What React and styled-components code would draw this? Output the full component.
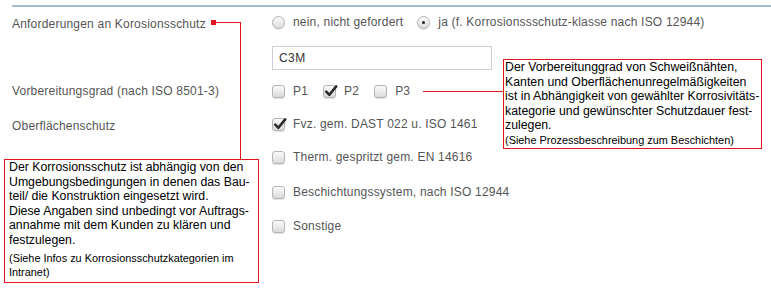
import React from 'react';
import styled, { createGlobalStyle } from 'styled-components';

const GlobalStyle = createGlobalStyle`
  body {
    margin: 0;
    background: #fff;
    font-family: "Liberation Sans", Arial, sans-serif;
  }
`

const Page = styled.div`
  position: relative;
  width: 771px;
  height: 294px;
  padding-left: 12px;
  box-sizing: border-box;
  overflow: hidden;
`

const Divider = styled.div`
  margin-top: 5px;
  height: 2px;
  background: #a3bccb;
`

const Row = styled.div`
  display: grid;
  grid-template-columns: 260px 1fr;
  align-items: center;
  height: ${p => p.h}px;
  margin-top: ${p => p.mt || 0}px;
`

const Label = styled.div`
  font-size: 12px;
  letter-spacing: 0.2px;
  color: #555;
  padding-top: ${p => p.shift || 0}px;
`

const Options = styled.div`
  display: flex;
  align-items: center;
  gap: ${p => p.gap}px;
`

const Option = styled.label`
  display: flex;
  align-items: center;
  gap: 8px;
  font-size: 12px;
  letter-spacing: 0.2px;
  color: #555;
  white-space: nowrap;
`

const RadioDot = styled.span`
  position: relative;
  width: 13px;
  height: 13px;
  border-radius: 50%;
  border: 1px solid #b4b4b4;
  background: linear-gradient(#fbfbfb, #dcdcdc);
  box-sizing: border-box;
  box-shadow: 0 1px 1px rgba(0, 0, 0, 0.12);

  &::after {
    content: '';
    display: ${p => (p.checked ? 'block' : 'none')};
    position: absolute;
    left: 4px;
    top: 4px;
    width: 3px;
    height: 3px;
    border-radius: 50%;
    background: #222;
  }
`

const Box = styled.span`
  position: relative;
  width: 13px;
  height: 13px;
  border-radius: 3px;
  border: 1px solid #b4b4b4;
  background: linear-gradient(#fbfbfb, #dadada);
  box-sizing: border-box;
  box-shadow: 0 1px 1px rgba(0, 0, 0, 0.12);

  svg {
    position: absolute;
    left: -1px;
    top: -3px;
    overflow: visible;
  }
`

const TextInput = styled.input`
  width: 220px;
  height: 24px;
  box-sizing: border-box;
  border: 1px solid #cfcfcf;
  padding: 0 6px;
  font-family: "Liberation Sans", Arial, sans-serif;
  font-size: 12px;
  letter-spacing: 0.4px;
  color: #333;
  outline: none;
`

const Callout = styled.div`
  position: absolute;
  left: ${p => p.x}px;
  top: ${p => p.y}px;
  width: ${p => p.w}px;
  height: ${p => p.h}px;
  box-sizing: border-box;
  border: 1px solid #e3141f;
  background: #fff;
  padding: 0 0 0 ${p => p.pad}px;
  color: #000;
  white-space: nowrap;
`

const CalloutText = styled.div`
  font-size: 12.3px;
  line-height: 14.6px;
`

const CalloutNote = styled.div`
  font-size: 10.9px;
  line-height: 14.3px;
  margin-top: ${p => p.mt || 0}px;
`

const Leader = styled.div`
  position: absolute;
  left: ${p => p.x}px;
  top: ${p => p.y}px;
  width: ${p => p.w}px;
  height: ${p => p.h}px;
  background: #e3141f;
`

const Check = ({ checked }) => (
  <Box>
    {checked && (
      <svg width="16" height="16" viewBox="0 0 16 16">
        <path d="M3.2 8.6 L6.4 11.8 L13.2 3.4" fill="none" stroke="#2b2b2b" strokeWidth="2.6" strokeLinecap="round" strokeLinejoin="round" />
      </svg>
    )}
  </Box>
);

const App = () => {
    return (
        <Page>
            <GlobalStyle />
            <Divider />

            <Row h={30}>
                <Label shift={4}>Anforderungen an Korosionsschutz</Label>
                <Options gap={14}>
                    <Option><RadioDot />nein, nicht gefordert</Option>
                    <Option><RadioDot checked />ja (f. Korrosionssschutz-klasse nach ISO 12944)</Option>
                </Options>
            </Row>

            <Row h={24} mt={9}>
                <div />
                <TextInput defaultValue="C3M" readOnly />
            </Row>

            <Row h={34} mt={4}>
                <Label>Vorbereitungsgrad (nach ISO 8501-3)</Label>
                <Options gap={15}>
                    <Option><Check />P1</Option>
                    <Option><Check checked />P2</Option>
                    <Option><Check />P3</Option>
                </Options>
            </Row>

            <Row h={32}>
                <Label shift={4}>Oberflächenschutz</Label>
                <Option><Check checked />Fvz. gem. DAST 022 u. ISO 1461</Option>
            </Row>

            <Row h={34}>
                <div />
                <Option><Check />Therm. gespritzt gem. EN 14616</Option>
            </Row>

            <Row h={36}>
                <div />
                <Option><Check />Beschichtungssystem, nach ISO 12944</Option>
            </Row>

            <Row h={32}>
                <div />
                <Option><Check />Sonstige</Option>
            </Row>

            {/* leader lines to the hints */}
            <Leader x={211} y={20} w={5} h={5} />
            <Leader x={216} y={22} w={25} h={1} />
            <Leader x={240} y={22} w={1} h={137} />
            <Leader x={423} y={91} w={80} h={1} />

            <Callout x={4} y={159} w={255} h={124} pad={4}>
                <CalloutText>
                    Der Korrosionsschutz ist abhängig von den<br />
                    Umgebungsbedingungen in denen das Bau-<br />
                    teil/ die Konstruktion eingesetzt wird.<br />
                    Diese Angaben sind unbedingt vor Auftrags-<br />
                    annahme mit dem Kunden zu klären und<br />
                    festzulegen.
                </CalloutText>
                <CalloutNote mt={3}>
                    (Siehe Infos zu Korrosionsschutzkategorien im<br />
                    Intranet)
                </CalloutNote>
            </Callout>

            <Callout x={503} y={59} w={259} h={90} pad={1}>
                <CalloutText>
                    Der Vorbereitunggrad von Schweißnähten,<br />
                    Kanten und Oberflächenunregelmäßigkeiten<br />
                    ist in Abhängigkeit von gewählter Korrosivitäts-<br />
                    kategorie und gewünschter Schutzdauer fest-<br />
                    zulegen.
                </CalloutText>
                <CalloutNote>
                    (Siehe Prozessbeschreibung zum Beschichten)
                </CalloutNote>
            </Callout>
        </Page>
    );
};

export default App;
